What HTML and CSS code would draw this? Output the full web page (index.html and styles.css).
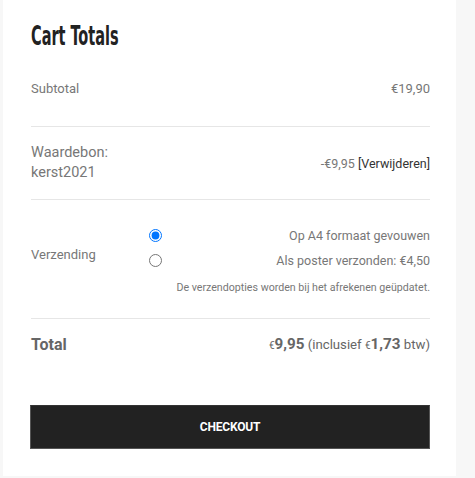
FILE: index.html
```html
<!DOCTYPE html>
<html lang="nl">
<head>
<meta charset="utf-8">
<link rel="stylesheet" href="styles.css">
</head>
<body>
<div class="card">
  <h2 class="title">Cart Totals</h2>
  <div class="row row-sub">
    <div class="label">Subtotal</div>
    <div class="value">€19,90</div>
  </div>
  <div class="row row-coupon">
    <div class="label label-lg">Waardebon:<br>kerst2021</div>
    <div class="value">-€9,95 <a class="remove">[Verwijderen]</a></div>
  </div>
  <div class="row row-ship">
    <div class="label ship-label">Verzending</div>
    <div class="ship-opts">
      <ul class="methods">
        <li><input type="radio" name="ship" checked><span>Op A4 formaat gevouwen</span></li>
        <li><input type="radio" name="ship"><span>Als poster verzonden: €4,50</span></li>
      </ul>
      <p class="note">De verzendopties worden bij het afrekenen geüpdatet.</p>
    </div>
  </div>
  <div class="row row-total">
    <div class="total-label">Total</div>
    <div class="total-value"><span class="cur">€</span><b>9,95</b> (inclusief <span class="cur">€</span><b>1,73</b> btw)</div>
  </div>
  <button class="checkout">CHECKOUT</button>
</div>
</body>
</html>
```
FILE: styles.css
```css
html, body {
  margin: 0;
  padding: 0;
  background: #f7f7f7;
  height: 100%;
}
body {
  font-family: Roboto, "Liberation Sans", sans-serif;
  color: #777;
}
.card {
  margin-left: 3px;
  width: 453px;
  box-sizing: border-box;
  background: #fff;
  padding: 21px 26px 27px 28px;
}
.title {
  margin: 0 0 1px 0;
  font-family: "DejaVu Sans Condensed", sans-serif;
  font-weight: 700;
  font-size: 26px;
  line-height: 30px;
  color: #222;
  transform: scaleX(0.62);
  transform-origin: left center;
}
.row {
  display: flex;
  justify-content: space-between;
  align-items: center;
  border-bottom: 1px solid #e6e6e6;
}
.row-sub {
  padding: 28px 0;
  line-height: 18px;
  font-size: 13px;
}
.row-coupon {
  padding: 16px 0;
}
.label-lg {
  font-size: 14.5px;
  line-height: 20px;
}
.row-coupon .value {
  font-size: 12.5px;
}
.remove {
  color: #333;
}
.row-ship {
  align-items: stretch;
  height: 119px;
  box-sizing: border-box;
}
.ship-label {
  font-size: 13px;
  align-self: center;
  margin-bottom: 10px;
}
.ship-opts {
  width: 281px;
  padding-top: 26px;
}
.methods {
  list-style: none;
  margin: 0;
  padding: 0;
  display: flex;
  flex-direction: column;
  gap: 7px;
}
.methods li {
  display: flex;
  justify-content: space-between;
  align-items: center;
  height: 18px;
  font-size: 12.5px;
}
.methods input {
  margin: 0;
  width: 13px;
  height: 13px;
}
.note {
  margin: 12px 0 0 0;
  font-size: 10.65px;
  line-height: 14px;
  text-align: right;
}
.row-total {
  border-bottom: none;
  padding-top: 15px;
  line-height: 20px;
  color: #666;
}
.total-label {
  font-weight: 700;
  font-size: 16px;
}
.total-value {
  font-size: 13.2px;
}
.total-value b {
  font-size: 15.2px;
}
.cur {
  font-size: 10px;
}
.checkout {
  display: block;
  margin: 49px 0 0 -1px;
  width: 400px;
  height: 44px;
  background: #222;
  color: #fff;
  border: 1px solid #555;
  border-top-color: #333;
  font-family: Roboto, "Liberation Sans", sans-serif;
  font-weight: 700;
  font-size: 12px;
  letter-spacing: -0.2px;
}
```
